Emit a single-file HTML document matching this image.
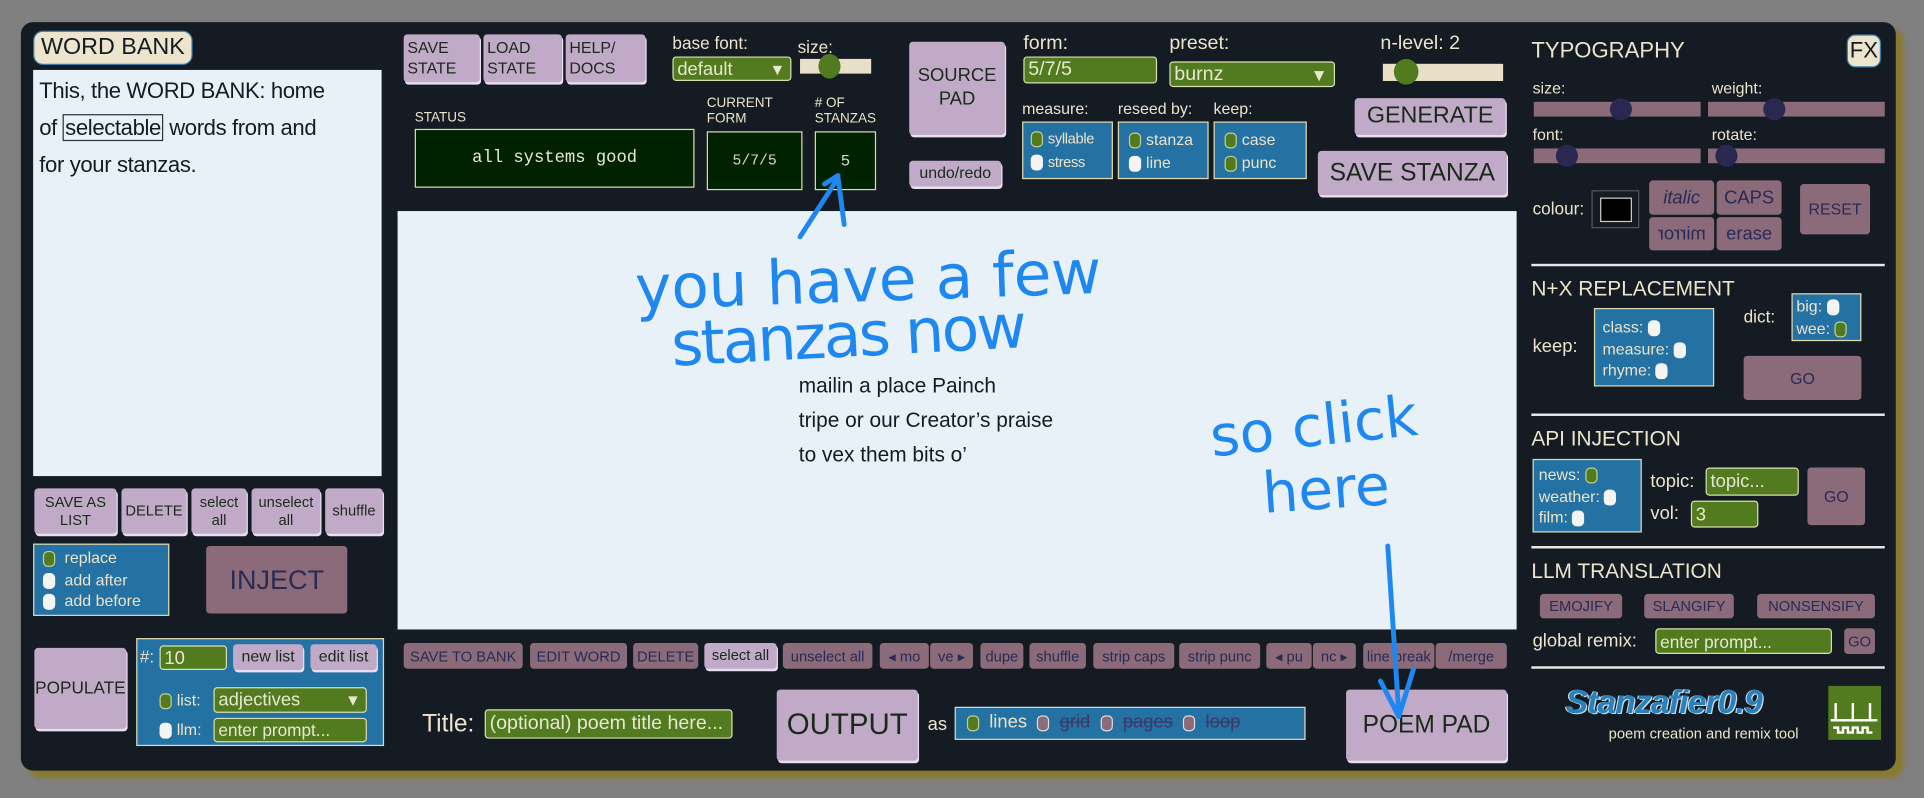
<!DOCTYPE html>
<html><head><meta charset="utf-8"><style>
*{margin:0;padding:0;box-sizing:border-box}
html,body{width:1924px;height:797px;overflow:hidden;background:#808080}
#s{position:absolute;left:0;top:0;width:1568px;height:650px;transform:scale(1.22704);transform-origin:0 0;font-family:"Liberation Sans",sans-serif;white-space:nowrap}
.a{position:absolute}
.b{position:absolute;background:#c0aac8;color:#1a2a1a;border-radius:3px;box-shadow:1px 2px 0 #e8e0f0;display:flex;align-items:center;justify-content:center;text-align:center;line-height:1.25}
.m{position:absolute;background:#8b6b7a;color:#2a2a55;border-radius:3px;display:flex;align-items:center;justify-content:center;text-align:center}
.l{position:absolute;color:#ece4cc;font-size:14px}
.g{position:absolute;background:#527a1e;border:1px solid #d8e0b0;border-radius:3px;color:#e8e8d0;padding-left:3px;display:flex;align-items:center}
.bx{position:absolute;background:#2471a3;border:1px solid #e0d8b0}
.cb{display:inline-block;width:10px;height:13px;border-radius:4px;background:#f4f4f4;vertical-align:middle;margin-right:4px}
.cg{background:#527a1e;border:1px solid #c0d090}
.cm{background:#8b6b7a;border:1px solid #ddd}
.hr{position:absolute;left:1248px;width:288px;height:2px;background:#e8e8e8}
.sl{position:absolute;background:#8b6b7a;height:12px}
.th{position:absolute;width:18px;height:18px;border-radius:50%;background:#2a2850;top:-3px}
</style></head><body><div id="s">
<div class="a" style="left:17px;top:18px;width:1528px;height:610px;background:#151b23;border-radius:10px;box-shadow:6px 6px 4px #8a7a30"></div>

<div class="a" style="left:27px;top:25px;width:130px;height:28px;background:#ece4cc;border:1px solid #3a7aa8;border-radius:8px;font-size:19px;color:#151b23;display:flex;align-items:center;justify-content:center">WORD BANK</div>
<div class="a" style="left:27px;top:57px;width:284px;height:331px;background:#e8f0f8;font-size:18px;line-height:30px;padding:2px 5px;color:#151b23;letter-spacing:-0.3px">This, the WORD BANK: home<br>of <span style="border:1px solid #333;padding:0 1px">selectable</span> words from and<br>for your stanzas.</div>

<div class="b" style="left:28px;top:398px;width:67px;height:37px;font-size:12px">SAVE AS<br>LIST</div>
<div class="b" style="left:99px;top:398px;width:53px;height:37px;font-size:12px">DELETE</div>
<div class="b" style="left:156px;top:398px;width:45px;height:37px;font-size:12px">select<br>all</div>
<div class="b" style="left:205px;top:398px;width:56px;height:37px;font-size:12px">unselect<br>all</div>
<div class="b" style="left:265px;top:398px;width:47px;height:37px;font-size:12px">shuffle</div>

<div class="bx" style="left:27px;top:443px;width:111px;height:59px;font-size:13px;color:#ece4cc;padding:2px 7px;line-height:17.5px"><div><span class="cb cg"></span> replace</div><div><span class="cb"></span> add after</div><div><span class="cb"></span> add before</div></div>
<div class="m" style="left:168px;top:445px;width:115px;height:55px;font-size:22px">INJECT</div>

<div class="b" style="left:28px;top:528px;width:75px;height:66px;font-size:14px">POPULATE</div>
<div class="bx" style="left:111px;top:520px;width:202px;height:88px"></div>
<div class="l" style="left:114px;top:527px">#:</div>
<div class="g" style="left:130px;top:526px;width:55px;height:20px;font-size:15px">10</div>
<div class="b" style="left:190px;top:525px;width:57px;height:21px;font-size:13px">new list</div>
<div class="b" style="left:253px;top:525px;width:54px;height:21px;font-size:13px">edit list</div>
<div class="l" style="left:130px;top:563px;font-size:13px"><span class="cb cg"></span>list:</div>
<div class="g" style="left:174px;top:560px;width:125px;height:21px;font-size:15px">adjectives<span style="margin-left:auto;margin-right:4px;font-size:13px">▼</span></div>
<div class="l" style="left:130px;top:587px;font-size:13px"><span class="cb"></span>llm:</div>
<div class="g" style="left:174px;top:585px;width:125px;height:20px;font-size:14px">enter prompt...</div>

<div class="b" style="left:329px;top:28px;width:62px;height:39px;font-size:13px;justify-content:flex-start;padding-left:3px;text-align:left">SAVE<br>STATE</div>
<div class="b" style="left:394px;top:28px;width:64px;height:39px;font-size:13px;justify-content:flex-start;padding-left:3px;text-align:left">LOAD<br>STATE</div>
<div class="b" style="left:461px;top:28px;width:65px;height:39px;font-size:13px;justify-content:flex-start;padding-left:3px;text-align:left">HELP/<br>DOCS</div>
<div class="l" style="left:548px;top:27px">base font:</div>
<div class="g" style="left:548px;top:46px;width:97px;height:20px;font-size:15px">default<span style="margin-left:auto;margin-right:4px;font-size:13px">▼</span></div>
<div class="l" style="left:650px;top:30px">size:</div>
<div class="a" style="left:652px;top:48px;width:58px;height:12px;background:#e8dfc8"></div>
<div class="a" style="left:667px;top:44px;width:18px;height:20px;border-radius:50%;background:#527a1e"></div>

<div class="l" style="left:338px;top:90px;font-size:11px">STATUS</div>
<div class="a" style="left:338px;top:105px;width:228px;height:48px;background:#002200;border:1px solid #e0d8b0;color:#e8e8d0;font-family:'Liberation Mono',monospace;font-size:14px;display:flex;align-items:center;justify-content:center">all systems good</div>
<div class="l" style="left:576px;top:78px;font-size:11px;line-height:13px">CURRENT<br>FORM</div>
<div class="a" style="left:576px;top:107px;width:78px;height:48px;background:#002200;border:1px solid #e0d8b0;color:#d8d8c0;font-family:'Liberation Mono',monospace;font-size:12px;display:flex;align-items:center;justify-content:center">5/7/5</div>
<div class="l" style="left:664px;top:78px;font-size:11px;line-height:13px"># OF<br>STANZAS</div>
<div class="a" style="left:664px;top:107px;width:50px;height:48px;background:#002200;border:1px solid #e0d8b0;color:#d8d8c0;font-family:'Liberation Mono',monospace;font-size:13px;display:flex;align-items:center;justify-content:center">5</div>

<div class="b" style="left:741px;top:34px;width:78px;height:76px;font-size:15px">SOURCE<br>PAD</div>
<div class="b" style="left:741px;top:131px;width:75px;height:21px;font-size:13px">undo/redo</div>

<div class="l" style="left:834px;top:27px;font-size:16px">form:</div>
<div class="g" style="left:834px;top:46px;width:109px;height:22px;font-size:16px">5/7/5</div>
<div class="l" style="left:953px;top:27px;font-size:16px">preset:</div>
<div class="g" style="left:953px;top:50px;width:135px;height:21px;font-size:16px">burnz<span style="margin-left:auto;margin-right:5px;font-size:14px">▼</span></div>
<div class="l" style="left:1125px;top:27px;font-size:16px">n-level: 2</div>
<div class="a" style="left:1127px;top:52px;width:98px;height:14px;background:#e8dfc8"></div>
<div class="a" style="left:1136px;top:48px;width:20px;height:21px;border-radius:50%;background:#527a1e"></div>
<div class="l" style="left:833px;top:81px;font-size:13px">measure:</div>
<div class="l" style="left:911px;top:81px;font-size:13px">reseed by:</div>
<div class="l" style="left:989px;top:81px;font-size:13px">keep:</div>
<div class="bx" style="left:833px;top:99px;width:74px;height:47px;font-size:12px;color:#ece4cc;padding:4px 6px;line-height:19px;letter-spacing:-0.3px"><div><span class="cb cg"></span>syllable</div><div><span class="cb"></span>stress</div></div>
<div class="bx" style="left:911px;top:99px;width:74px;height:47px;font-size:13px;color:#ece4cc;padding:4px 8px;line-height:19px"><div><span class="cb cg"></span>stanza</div><div><span class="cb"></span>line</div></div>
<div class="bx" style="left:989px;top:99px;width:76px;height:47px;font-size:13px;color:#ece4cc;padding:4px 8px;line-height:19px"><div><span class="cb cg"></span>case</div><div><span class="cb cg"></span>punc</div></div>
<div class="b" style="left:1104px;top:80px;width:123px;height:30px;font-size:19px">GENERATE</div>
<div class="b" style="left:1074px;top:123px;width:154px;height:36px;font-size:20px">SAVE STANZA</div>

<div class="a" style="left:324px;top:172px;width:912px;height:341px;background:#e8f0f8"></div>
<div class="a" style="left:651px;top:301px;font-size:17px;line-height:28px;color:#151b23">mailin a place Painch<br>tripe or our Creator’s praise<br>to vex them bits o’</div>

<div class="m" style="left:329px;top:524px;width:97px;height:21px;font-size:12px">SAVE TO BANK</div>
<div class="m" style="left:432px;top:524px;width:79px;height:21px;font-size:12px">EDIT WORD</div>
<div class="m" style="left:516px;top:524px;width:53px;height:21px;font-size:12px">DELETE</div>
<div class="b" style="left:574px;top:524px;width:59px;height:21px;font-size:12px">select all</div>
<div class="m" style="left:638px;top:524px;width:73px;height:21px;font-size:12px">unselect all</div>
<div class="m" style="left:717px;top:524px;width:40px;height:21px;font-size:12px">◂ mo</div>
<div class="m" style="left:758px;top:524px;width:35px;height:21px;font-size:12px">ve ▸</div>
<div class="m" style="left:799px;top:524px;width:35px;height:21px;font-size:12px">dupe</div>
<div class="m" style="left:839px;top:524px;width:46px;height:21px;font-size:12px">shuffle</div>
<div class="m" style="left:891px;top:524px;width:66px;height:21px;font-size:12px">strip caps</div>
<div class="m" style="left:961px;top:524px;width:66px;height:21px;font-size:12px">strip punc</div>
<div class="m" style="left:1032px;top:524px;width:37px;height:21px;font-size:12px">◂ pu</div>
<div class="m" style="left:1070px;top:524px;width:35px;height:21px;font-size:12px">nc ▸</div>
<div class="m" style="left:1111px;top:524px;width:58px;height:21px;font-size:12px">line break</div>
<div class="m" style="left:1170px;top:524px;width:58px;height:21px;font-size:12px">/merge</div>

<div class="l" style="left:344px;top:579px;font-size:20px">Title:</div>
<div class="g" style="left:395px;top:578px;width:202px;height:24px;font-size:16px">(optional) poem title here...</div>
<div class="b" style="left:633px;top:562px;width:115px;height:58px;font-size:24px">OUTPUT</div>
<div class="l" style="left:756px;top:582px;font-size:15px">as</div>
<div class="bx" style="left:778px;top:576px;width:286px;height:27px;font-size:15px;color:#ece4cc;padding:3px 9px;white-space:nowrap"><span class="cb cg"></span> lines&nbsp; <span class="cb cm"></span> <s style="color:#3a3a6a">grid</s>&nbsp; <span class="cb cm"></span> <s style="color:#3a3a6a">pages</s>&nbsp; <span class="cb cm"></span> <s style="color:#3a3a6a">loop</s></div>
<div class="b" style="left:1097px;top:562px;width:131px;height:58px;font-size:20px">POEM PAD</div>

<div class="l" style="left:1248px;top:31px;font-size:18px">TYPOGRAPHY</div>
<div class="a" style="left:1505px;top:28px;width:28px;height:27px;background:#ece4cc;border:1px solid #3a7aa8;border-radius:7px;font-size:18px;color:#151b23;display:flex;align-items:center;justify-content:center">FX</div>
<div class="l" style="left:1249px;top:64px;font-size:13px">size:</div>
<div class="l" style="left:1395px;top:64px;font-size:13px">weight:</div>
<div class="sl" style="left:1250px;top:83px;width:136px"><div class="th" style="left:62px"></div></div>
<div class="sl" style="left:1392px;top:83px;width:144px"><div class="th" style="left:45px"></div></div>
<div class="l" style="left:1249px;top:102px;font-size:13px">font:</div>
<div class="l" style="left:1395px;top:102px;font-size:13px">rotate:</div>
<div class="sl" style="left:1250px;top:121px;width:136px"><div class="th" style="left:18px"></div></div>
<div class="sl" style="left:1392px;top:121px;width:144px"><div class="th" style="left:6px"></div></div>
<div class="l" style="left:1249px;top:162px;font-size:14px">colour:</div>
<div class="a" style="left:1297px;top:155px;width:39px;height:31px;border:1px solid #555;background:#151b23"><div style="margin:5px 6px;width:26px;height:20px;background:#000;border:1px solid #ccc"></div></div>
<div class="m" style="left:1344px;top:147px;width:53px;height:28px;font-size:15px;font-style:italic">italic</div>
<div class="m" style="left:1399px;top:147px;width:53px;height:28px;font-size:15px">CAPS</div>
<div class="m" style="left:1344px;top:177px;width:53px;height:27px;font-size:15px"><span style="display:inline-block;transform:scaleX(-1)">mirror</span></div>
<div class="m" style="left:1399px;top:177px;width:53px;height:27px;font-size:15px">erase</div>
<div class="m" style="left:1467px;top:150px;width:57px;height:41px;font-size:13px">RESET</div>
<div class="hr" style="top:215px"></div>

<div class="l" style="left:1248px;top:226px;font-size:17px">N+X REPLACEMENT</div>
<div class="l" style="left:1249px;top:274px;font-size:15px">keep:</div>
<div class="bx" style="left:1299px;top:251px;width:98px;height:64px;font-size:13px;color:#ece4cc;padding:6px 6px;line-height:17.5px"><div>class: <span class="cb"></span></div><div>measure: <span class="cb"></span></div><div>rhyme: <span class="cb"></span></div></div>
<div class="l" style="left:1421px;top:250px;font-size:14px">dict:</div>
<div class="bx" style="left:1460px;top:239px;width:57px;height:39px;font-size:13px;color:#ece4cc;padding:1px 3px;line-height:18px"><div>big: <span class="cb"></span></div><div>wee: <span class="cb cg"></span></div></div>
<div class="m" style="left:1421px;top:290px;width:96px;height:36px;font-size:13px">GO</div>
<div class="hr" style="top:337px"></div>

<div class="l" style="left:1248px;top:348px;font-size:17px">API INJECTION</div>
<div class="bx" style="left:1249px;top:374px;width:89px;height:60px;font-size:13px;color:#ece4cc;padding:3px 4px;line-height:17.5px"><div>news: <span class="cb cg"></span></div><div>weather: <span class="cb"></span></div><div>film: <span class="cb"></span></div></div>
<div class="l" style="left:1345px;top:384px;font-size:15px">topic:</div>
<div class="g" style="left:1390px;top:381px;width:76px;height:23px;font-size:15px">topic...</div>
<div class="l" style="left:1345px;top:410px;font-size:15px">vol:</div>
<div class="g" style="left:1378px;top:408px;width:55px;height:22px;font-size:15px">3</div>
<div class="m" style="left:1473px;top:381px;width:47px;height:47px;font-size:13px">GO</div>
<div class="hr" style="top:445px"></div>

<div class="l" style="left:1248px;top:456px;font-size:17px">LLM TRANSLATION</div>
<div class="m" style="left:1255px;top:484px;width:67px;height:20px;font-size:12px">EMOJIFY</div>
<div class="m" style="left:1340px;top:484px;width:73px;height:20px;font-size:12px">SLANGIFY</div>
<div class="m" style="left:1432px;top:484px;width:96px;height:20px;font-size:12px">NONSENSIFY</div>
<div class="l" style="left:1249px;top:514px;font-size:15px">global remix:</div>
<div class="g" style="left:1349px;top:512px;width:144px;height:21px;font-size:14px">enter prompt...</div>
<div class="m" style="left:1503px;top:512px;width:25px;height:21px;font-size:12px">GO</div>
<div class="hr" style="top:543px"></div>

<div class="a" style="left:1276px;top:557px;font-size:27px;font-weight:bold;font-style:italic;color:#2a80b8;text-shadow:1px 1px 0 #c0d8e8,-1px 0 0 #c0d8e8;letter-spacing:-0.5px">Stanzafier0.9</div>
<div class="l" style="left:1311px;top:591px;font-size:12px">poem creation and remix tool</div>
<div class="a" style="left:1490px;top:559px;width:43px;height:44px;background:#527a1e">
<svg width="43" height="44" viewBox="0 0 43 44"><g stroke="#fff" stroke-width="2" fill="none"><path d="M6 14v14M20 14v14M34 14v14M2 28h38"/><path d="M4 34h4v4h4v-4h4v4h4v-4h4v4h4v-4h4v4h4"/></g></svg></div>

<svg class="a" style="left:0;top:0" width="1568" height="650">
<g fill="none" stroke="#1e88f0" stroke-width="4" stroke-linecap="round" stroke-linejoin="round">
<path d="M652 193 L683 145 L688 183 M672 150 L683 143"/>
<path d="M1131 445 Q1136 520 1140 582 M1125 555 L1140 584 L1152 545"/>
</g>
<g fill="#1e88f0" font-family="DejaVu Sans,sans-serif">
<text x="518" y="252" font-size="50" textLength="380" transform="rotate(-2 518 245)">you have a few</text>
<text x="548" y="298" font-size="50" textLength="290" transform="rotate(-3 548 298)">stanzas now</text>
<text x="988" y="372" font-size="46" transform="rotate(-6 988 372)">so click</text>
<text x="1030" y="418" font-size="46" transform="rotate(-4 1030 418)">here</text>
</g></svg>
</div></body></html>
